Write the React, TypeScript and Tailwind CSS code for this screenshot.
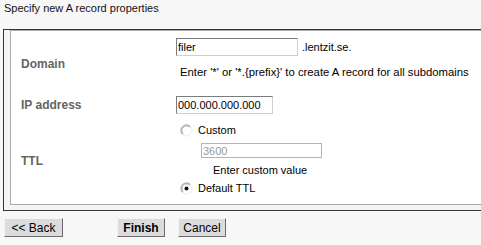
import React from 'react';

function Radio({ checked }: { checked?: boolean }) {
  return (
    <svg width="13" height="13" viewBox="0 0 13 13" className="shrink-0">
      <circle cx="6.5" cy="6.5" r="5.5" fill="#ffffff" />
      <path d="M10.4 2.6 A5.5 5.5 0 0 0 2.6 10.4" fill="none" stroke="#8a8a8a" strokeWidth="1" />
      <path d="M9.7 3.3 A4.5 4.5 0 0 0 3.3 9.7" fill="none" stroke="#b8b8b8" strokeWidth="1" />
      <path d="M2.6 10.4 A5.5 5.5 0 0 0 10.4 2.6" fill="none" stroke="#ececec" strokeWidth="1" />
      {checked && <circle cx="6.5" cy="6.5" r="2" fill="#111111" />}
    </svg>
  );
}

const inputCls =
  "block h-[18px] border border-t-[#7c7c7c] border-l-[#7c7c7c] border-r-[#cfcfcf] border-b-[#cfcfcf] bg-white px-[1px] text-[11px] leading-[14px] text-black outline-none font-['Liberation_Sans',Arial,sans-serif]";

const btnCls =
  "h-[19px] border border-t-[#f4f4f4] border-l-[#f4f4f4] border-r-[#6a6a6a] border-b-[#6a6a6a] bg-[#dcdcdc] text-[12px] leading-[16px] text-black";

export default function App() {
  return (
    <div className="w-[481px] h-[245px] overflow-hidden bg-[#f7f7f7] font-['Liberation_Sans',Arial,sans-serif] text-[11px] text-black">
      {/* Title */}
      <div className="h-[29px] pl-[4px] pt-[1px] leading-[14px] text-[#111]">Specify new A record properties</div>

      {/* Properties panel */}
      <div className="ml-[3px] w-[520px] border-l border-t border-b border-[#333333] bg-[#f4f4f4] pl-[6px] pb-[5px]">
        <div className="grid grid-cols-[165px_1fr] grid-rows-[64px_20px_89px] border-l border-t border-b border-[#ababab] bg-white">
          {/* Domain */}
          <div className="flex items-center pl-[10px] pt-[1px] text-[12px] font-bold text-[#646464]">Domain</div>
          <div className="pt-[7px]">
            <div className="flex items-center">
              <input className={`${inputCls} w-[122px]`} defaultValue="filer" readOnly />
              <span className="ml-[4px] leading-[14px]">.lentzit.se.</span>
            </div>
            <div className="mt-[9px] pl-[4px] leading-[14px] text-[11.3px]">
              Enter '*' or '*.{'{'}prefix{'}'}' to create A record for all subdomains
            </div>
          </div>

          {/* IP address */}
          <div className="flex items-center pl-[10px] text-[12px] font-bold text-[#646464]">IP address</div>
          <div className="flex items-center">
            <input className={`${inputCls} w-[97px]`} defaultValue="000.000.000.000" readOnly />
          </div>

          {/* TTL */}
          <div className="flex items-center pl-[10px] pt-[2px] text-[12px] font-bold text-[#646464]">TTL</div>
          <div className="pt-[8px]">
            <div className="flex h-[14px] items-center pl-[4px]">
              <Radio />
              <span className="ml-[5px] leading-[14px]">Custom</span>
            </div>
            <input
              className="mt-[6px] ml-[25px] block h-[15px] w-[121px] border border-[#b4b4b4] bg-white px-[1px] text-[11px] leading-[13px] text-[#9a9a9a] outline-none font-['Liberation_Sans',Arial,sans-serif]"
              defaultValue="3600"
              readOnly
            />
            <div className="mt-[5px] ml-[37px] leading-[14px]">Enter custom value</div>
            <div className="mt-[4px] flex h-[14px] items-center pl-[4px]">
              <Radio checked />
              <span className="ml-[5px] leading-[14px]">Default TTL</span>
            </div>
          </div>
        </div>
      </div>

      {/* Buttons */}
      <div className="mt-[7px] flex pl-[4px]">
        <button className={`${btnCls} w-[59px]`}>&lt;&lt; Back</button>
        <button className={`${btnCls} ml-[54px] w-[48px] font-bold`}>Finish</button>
        <button className={`${btnCls} ml-[13px] w-[48px]`}>Cancel</button>
      </div>
    </div>
  );
}
